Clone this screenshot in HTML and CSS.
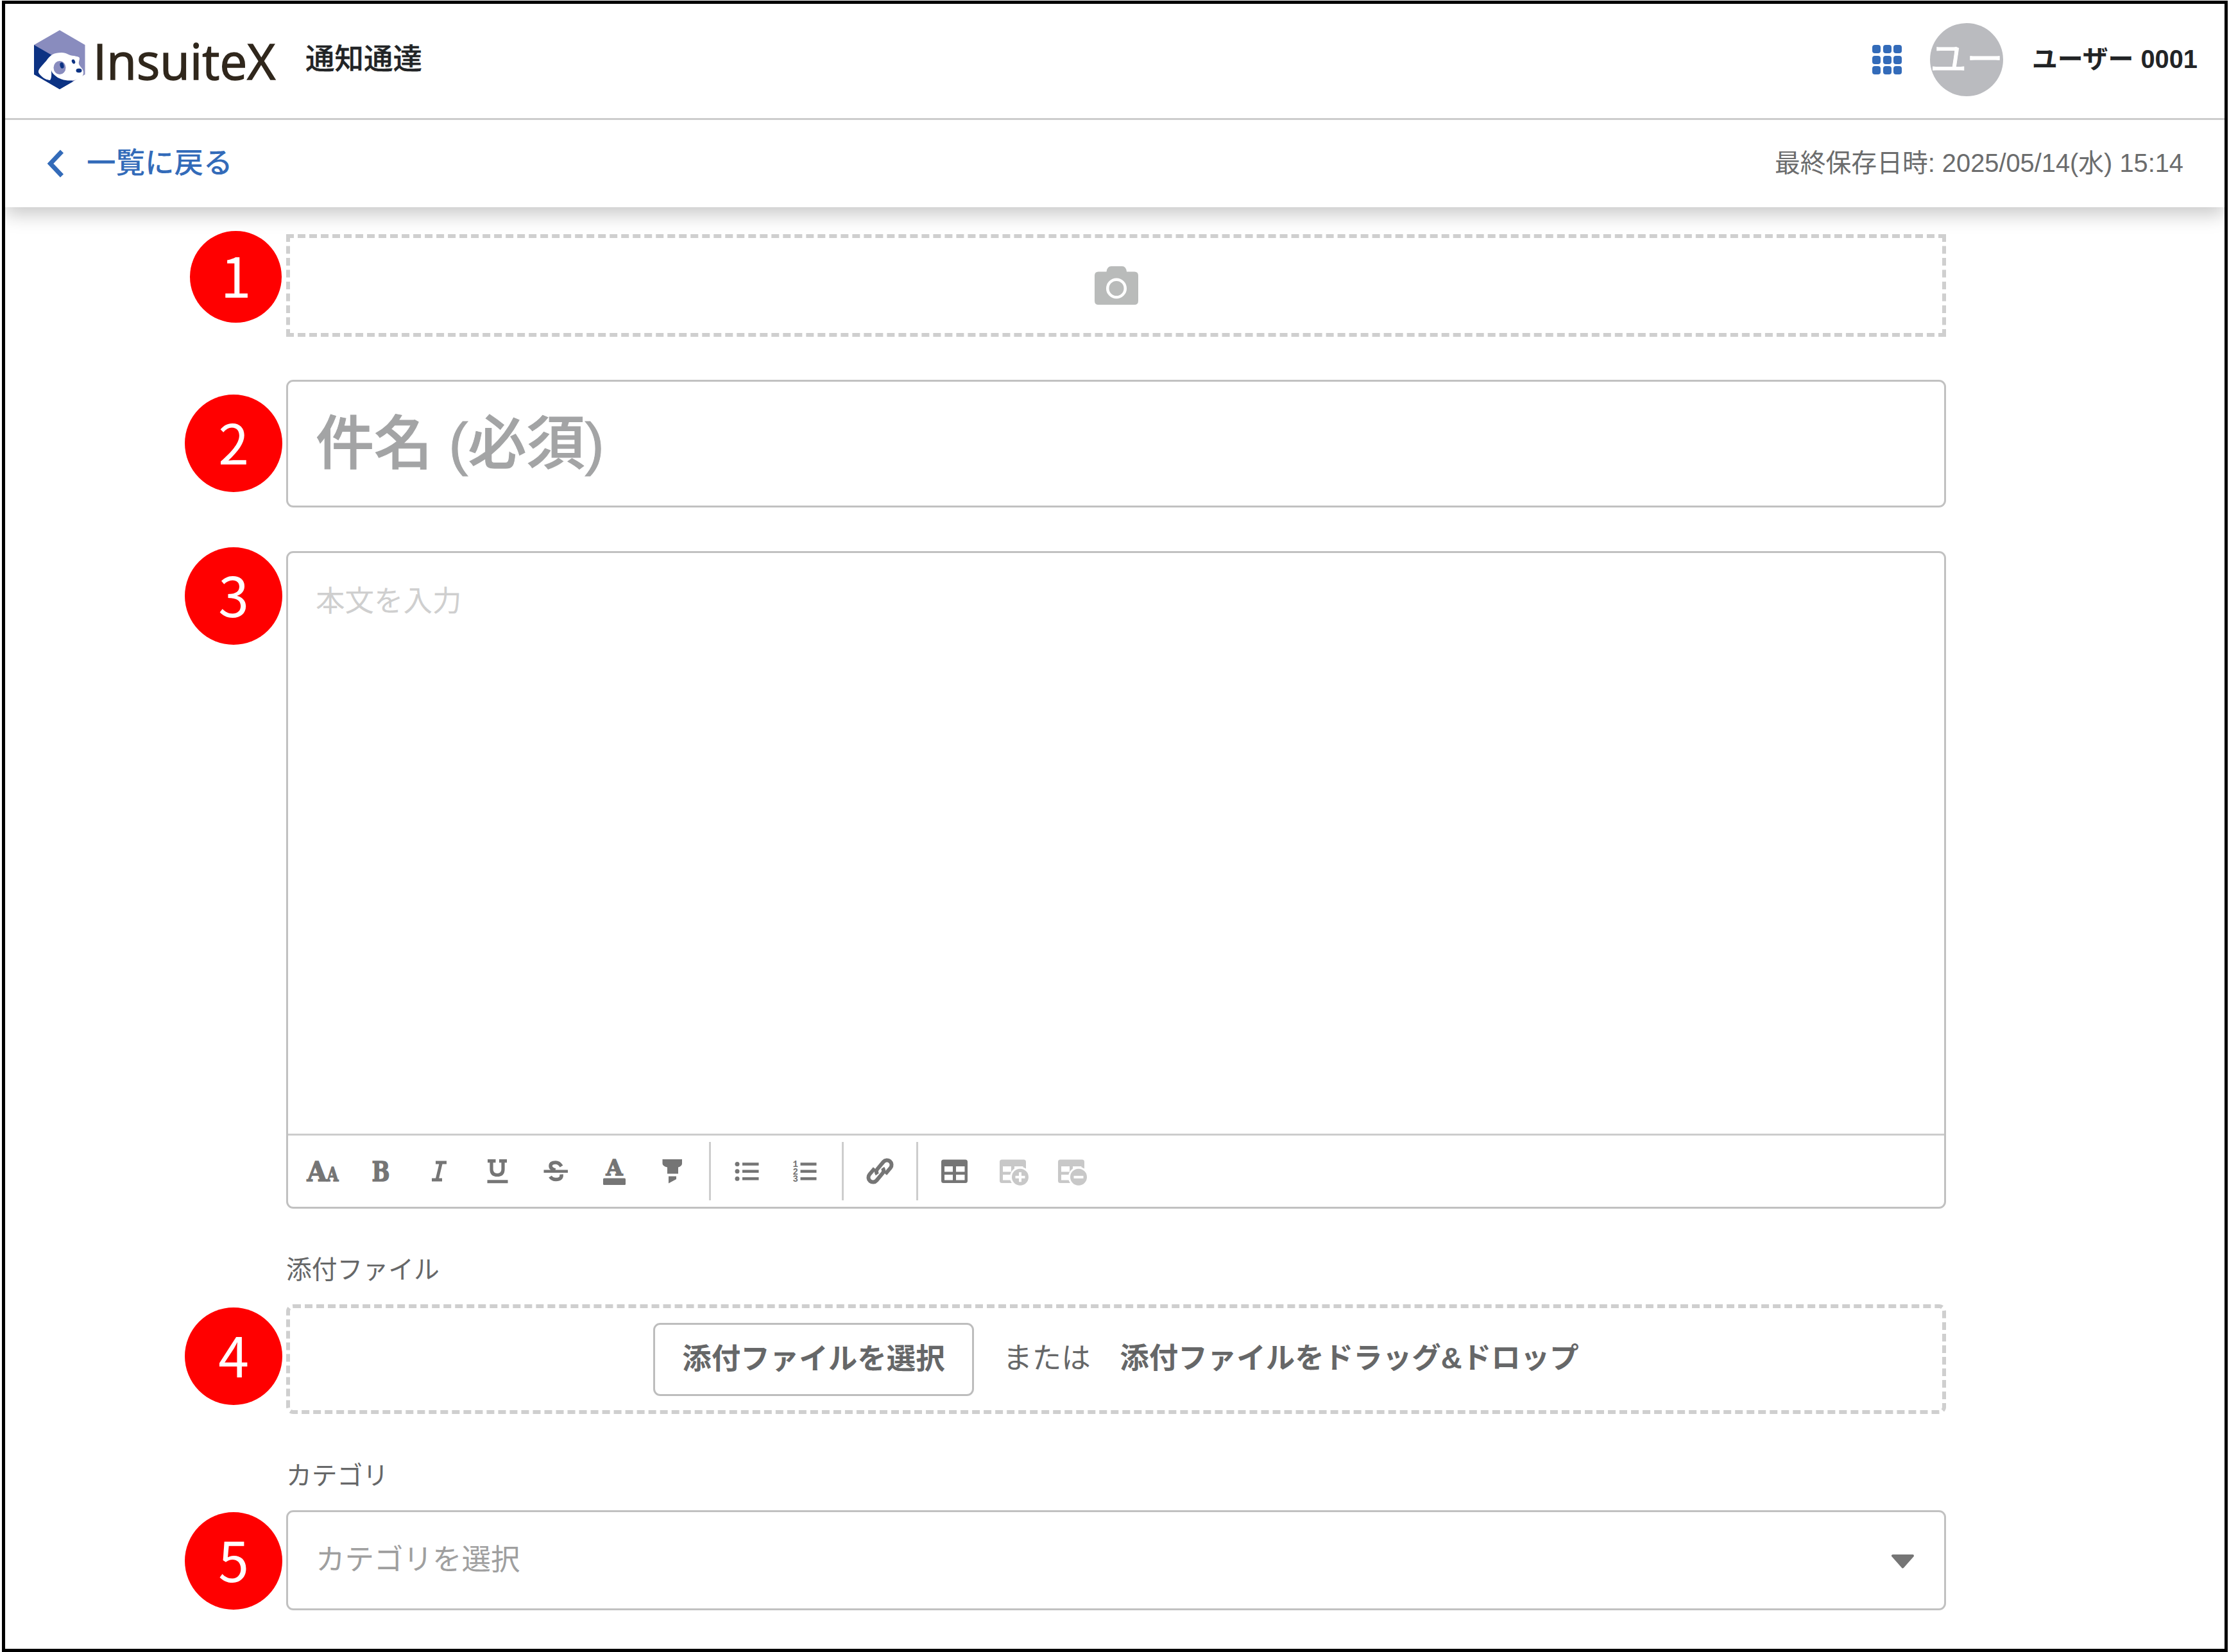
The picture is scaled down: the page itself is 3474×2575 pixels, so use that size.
FILE: index.html
```
<!DOCTYPE html>
<html lang="ja">
<head>
    <meta charset="utf-8" />
    <title>通知通達</title>
    <link rel="stylesheet" href="styles.css">
</head>
<body>
    <div id="frame">
        <div id="header">
            <svg class="logo_mark" viewBox="0 0 80 92">
                <polygon points="40,0 79.500,23 79.500,69 40,92 0,69 0,23" fill="#898cbe"/>
                <polygon points="0,23 40,46 60,80 40,92 0,69" fill="#0c3283"/>
                <path d="M7 66C6 61 12 56 19 48C26 38 31 35 43 35C51 35 55 40 62 40C66 41 71 41 71 44C71 47 69 50 70 53C72 58 77 60 77 66C77 72 74 74 66 77C57 80 41 79 32 70C29 67 27 65 27 62C27 68 28 74 25 78C20 79 10 72 7 66Z" fill="#fff"/>
                <ellipse cx="40" cy="58.500" rx="9.500" ry="10.500" fill="#898cbe"/>
                <ellipse cx="43.500" cy="55" rx="3" ry="4.700" fill="#0c3283" transform="rotate(-15 43.500 55)"/>
                <ellipse cx="61.500" cy="49" rx="2.500" ry="3.500" fill="#0c3283" transform="rotate(-25 61.500 49)"/>
                <ellipse cx="70" cy="63" rx="4.500" ry="3.200" fill="#0c3283"/>
                <path d="M40 92L62 79.500Q53 82 44 79L38 76Q30 81 20 77L13 76Z" fill="#0c3283"/>
            </svg>
            <div class="logo_text">InsuiteX</div>
            <div class="app_name">通知通達</div>
            <div class="apps_btn">
                <i></i><i></i><i></i>
                <i></i><i></i><i></i>
                <i></i><i></i><i></i>
            </div>
            <div class="avatar">ユー</div>
            <div class="user_name">ユーザー 0001</div>
        </div>
        <div id="sub_header">
            <svg class="back_icon" viewBox="0 0 28 46"><path d="M23.500 4L5.500 23L23.500 42" fill="none" stroke="#336bb9" stroke-width="7"/></svg>
            <div class="back_text">一覧に戻る</div>
            <div class="saved_at">最終保存日時: 2025/05/14(水) 15:14</div>
        </div>

        <div id="form">
            <!-- ヘッダー画像 -->
            <div class="photo_box">
                <div class="num num_small">1</div>
                <svg class="camera" viewBox="0 0 68 60">
                    <path d="M6 8.500H18.500Q19.500 0 26 0H43Q49 0 50 8.500H62Q68 8.500 68 14.500V54Q68 60 62 60H6Q0 60 0 54V14.500Q0 8.500 6 8.500Z" fill="#b9bbba"/>
                    <circle cx="34" cy="34.500" r="13.800" fill="none" stroke="#fff" stroke-width="4.500"/>
                </svg>
            </div>

            <!-- 件名 -->
            <div class="subject_box">
                <div class="num">2</div>
                <span>件名 (必須)</span>
            </div>

            <!-- 本文 -->
            <div class="editor">
                <div class="num">3</div>
                <div class="editor_body">本文を入力</div>
                <div class="toolbar">
                    <svg class="tool" viewBox="-45.5 -45.5 91 91">
                        <text x="-24" y="15.500" font-size="42" textLength="31" lengthAdjust="spacingAndGlyphs">A</text>
                        <text x="7" y="15.500" font-size="30" textLength="18" lengthAdjust="spacingAndGlyphs">A</text>
                    </svg>
                    <svg class="tool" viewBox="-45.5 -45.5 91 91"><text x="-14" y="15.500" font-size="42.500" textLength="28" lengthAdjust="spacingAndGlyphs">B</text></svg>
                    <svg class="tool" viewBox="-45.5 -45.5 91 91">
                        <path d="M-5.500 -13.500H11.500M-11.500 13.500H4.500M3 -13.500L-3.500 13.500" stroke-width="5"/>
                    </svg>
                    <svg class="tool" viewBox="-45.5 -45.5 91 91">
                        <path d="M-15.500 -15.800H-3M2.500 -15.800H14.500M-9.500 -16V-3Q-9.500 6 -0.500 6Q8.500 6 8.500 -3V-16" stroke-width="5.200"/>
                        <path d="M-16 16.200H16" stroke-width="5"/>
                    </svg>
                    <svg class="tool" viewBox="-45.5 -45.5 91 91">
                        <path d="M8.500 -7.500Q5 -13.500 -0.500 -13.500Q-8.500 -13.500 -8.500 -8Q-8.500 -3.500 -1 -1.500M8.500 5Q9.500 13 0 13Q-6 13 -9 8.500" stroke-width="5.600"/>
                        <path d="M-19 0.300H18.500" stroke-width="4.500"/>
                    </svg>
                    <svg class="tool" viewBox="-45.5 -45.5 91 91">
                        <text x="-13" y="6.500" font-size="34" textLength="26" lengthAdjust="spacingAndGlyphs">A</text>
                        <rect x="-17.500" y="11" width="35" height="10.500" rx="1.500"/>
                    </svg>
                    <svg class="tool" viewBox="-45.5 -45.5 91 91">
                        <path class="solid" d="M-16 -18.500H14.500V-12Q14.500 -8 8.500 -6V4H-8.500V-6Q-16 -8 -16 -12ZM-6.500 8H5.500V12.500L-6.500 19Z"/>
                    </svg>
                    <div class="tool_line"></div>
                    <svg class="tool" viewBox="-45.5 -45.5 91 91">
                        <circle cx="-15.500" cy="-11" r="3.500"/><circle cx="-15.500" cy="0.300" r="3.500"/><circle cx="-15.500" cy="11.700" r="3.500"/>
                        <path d="M-7.500 -11H18M-7.500 0.300H18M-7.500 11.700H18" stroke-width="4.600"/>
                    </svg>
                    <svg class="tool" viewBox="-45.5 -45.5 91 91">
                        <g class="list_no">
                            <text x="-20" y="-6.500">1</text>
                            <text x="-20" y="5">2</text>
                            <text x="-20" y="16.500">3</text>
                        </g>
                        <path d="M-8 -11H17M-8 0.300H17M-8 11.700H17" stroke-width="4.600"/>
                    </svg>
                    <div class="tool_line"></div>
                    <svg class="tool" viewBox="-45.5 -45.5 91 91">
                        <g transform="rotate(40)" stroke-width="6">
                            <path d="M9.200 -2V-14.500A7.200 7.200 0 0 0 -5.200 -14.500V0Q-5.200 5 0 6.500"/>
                            <path d="M-9.200 2V14.500A7.200 7.200 0 0 0 5.200 14.500V0Q5.200 -5 0 -6.500"/>
                        </g>
                    </svg>
                    <div class="tool_line"></div>
                    <svg class="tool" viewBox="-45.5 -45.5 91 91">
                        <path class="solid" fill-rule="evenodd" d="M-17 -18H17Q20.500 -18 20.500 -14.500V15Q20.500 18.500 17 18.500H-17Q-20.500 18.500 -20.500 15V-14.500Q-20.500 -18 -17 -18ZM-15.500 -7.500V1H-2.500V-7.500ZM2.500 -7.500V1H16V-7.500ZM-15.500 5.500V14H-2.500V5.500ZM2.500 5.500V14H16V5.500Z"/>
                    </svg>
                    <svg class="tool disabled" viewBox="-45.5 -45.5 91 91">
                        <path class="solid" fill-rule="evenodd" d="M-17 -18H17Q20.500 -18 20.500 -14.500V15Q20.500 18.500 17 18.500H-17Q-20.500 18.500 -20.500 15V-14.500Q-20.500 -18 -17 -18ZM-15.500 -7.500V1H-2.500V-7.500ZM2.500 -7.500V1H16V-7.500ZM-15.500 5.500V14H-2.500V5.500ZM2.500 5.500V14H16V5.500Z"/>
                        <circle class="white" cx="11.500" cy="9.300" r="16"/>
                        <rect class="white" x="17" y="8" width="10" height="15"/>
                        <circle cx="11.500" cy="9.300" r="13"/>
                        <path class="white_line" d="M4 9.300H19M11.500 1.800V16.800" stroke-width="4"/>
                    </svg>
                    <svg class="tool disabled" viewBox="-45.5 -45.5 91 91">
                        <path class="solid" fill-rule="evenodd" d="M-17 -18H17Q20.500 -18 20.500 -14.500V15Q20.500 18.500 17 18.500H-17Q-20.500 18.500 -20.500 15V-14.500Q-20.500 -18 -17 -18ZM-15.500 -7.500V1H-2.500V-7.500ZM2.500 -7.500V1H16V-7.500ZM-15.500 5.500V14H-2.500V5.500ZM2.500 5.500V14H16V5.500Z"/>
                        <circle class="white" cx="11.500" cy="9.300" r="16"/>
                        <rect class="white" x="17" y="8" width="10" height="15"/>
                        <circle cx="11.500" cy="9.300" r="13"/>
                        <path class="white_line" d="M4 9.300H19" stroke-width="4"/>
                    </svg>
                </div>
            </div>

            <!-- 添付ファイル -->
            <div class="label">添付ファイル</div>
            <div class="drop_box">
                <div class="num">4</div>
                <div class="file_btn">添付ファイルを選択</div>
                <div>または</div>
                <div class="drop_text">添付ファイルをドラッグ&amp;ドロップ</div>
            </div>

            <!-- カテゴリ -->
            <div class="label">カテゴリ</div>
            <div class="select_box">
                <div class="num">5</div>
                <div>カテゴリを選択</div>
                <svg class="arrow" viewBox="0 0 37 22"><path d="M3 2H34L18.500 19.500Z" fill="#757575" stroke="#757575" stroke-width="4" stroke-linejoin="round"/></svg>
            </div>
        </div>
    </div>
</body>
</html>
```
FILE: styles.css
```
*{
    box-sizing: border-box;
    padding: 0;
    margin: 0;
}
body{
    background-color: #fff;
    font-family: "Liberation Sans", "Noto Sans CJK JP", sans-serif;
    font-size: 45.5px;
    line-height: 1.5;
    white-space: nowrap;
}
svg{
    display: block;
    flex-shrink: 0;
}

#frame{
    height: 2574px;
    margin: 1px 2px 0 3px;
    border: 5px solid #000;
    overflow: hidden;
}

/* ヘッダー */
#header{
    position: relative;
    display: flex;
    align-items: center;
    height: 178px;
    padding: 0 42px 4px 45px;
    background-color: #fff;
}
.logo_mark{
    width: 80px;
    height: 92px;
}
.logo_text{
    width: 294px;
    margin-left: 12px;
    padding-top: 3px;
    font-family: "Open Sans", sans-serif;
    font-size: 76px;
    line-height: 92px;
    letter-spacing: 0.1px;
    color: #30271c;
    -webkit-text-stroke: 1.5px #30271c;
}
.app_name{
    margin-left: 37px;
    font-weight: 500;
    color: #222426;
    -webkit-text-stroke: 0.3px #222426;
}
.apps_btn{
    display: grid;
    grid-template-columns: repeat(3, 13px);
    gap: 3.5px;
    margin-left: auto;
}
.apps_btn i{
    height: 13px;
    border-radius: 4px;
    background-color: #336bb9;
}
.avatar{
    width: 114px;
    height: 114px;
    margin-left: 44px;
    border-radius: 50%;
    background-color: #babbbf;
    color: #fff;
    font-size: 57px;
    line-height: 112px;
    -webkit-text-stroke: 1px #fff;
}
.user_name{
    margin-left: 45px;
    font-size: 39.8px;
    font-weight: bold;
    color: #222426;
}

#sub_header{
    display: flex;
    align-items: center;
    height: 139px;
    padding: 0 64px 0 65px;
    border-top: 3px solid #ccc;
    box-shadow: 0 11px 28px rgba(0, 0, 0, 0.22);
}
.back_icon{
    width: 28px;
    height: 46px;
}
.back_text{
    margin-left: 34px;
    font-weight: 500;
    color: #336bb9;
}
.saved_at{
    margin-left: auto;
    font-size: 39.8px;
    color: #6b6c6d;
}

/* 入力フォーム */
#form{
    width: 2587px;
    margin: 42px 0 0 438px;
    color: #666768;
}
.num{
    position: absolute;
    width: 152px;
    height: 152px;
    border-radius: 50%;
    background-color: #f00;
    color: #fff;
    font-family: "Noto Sans CJK JP", sans-serif;
    font-size: 86px;
    font-weight: normal;
    line-height: 143px;
    text-align: center;
    -webkit-text-stroke: 0;
}
.num_small{
    width: 143px;
    height: 143px;
    line-height: 134px;
}
.photo_box, .subject_box, .editor, .drop_box, .select_box{
    position: relative;
}
.photo_box{
    display: flex;
    align-items: center;
    justify-content: center;
    height: 160px;
    border: 6px dashed #cfcfcf;
}
.photo_box .num{
    top: -11px;
    left: -156px;
}
.camera{
    width: 68px;
    height: 60px;
}
.subject_box{
    display: flex;
    align-items: center;
    height: 199px;
    margin-top: 67px;
    padding-left: 43px;
    border: 3px solid #c1c1c1;
    border-radius: 11px;
    color: #a3a4a5;
    font-size: 91px;
    font-weight: 500;
    line-height: 136px;
    -webkit-text-stroke: 1px #a3a4a5;
}
.subject_box .num{
    top: 20px;
    left: -161px;
}
.editor{
    height: 1025px;
    margin-top: 68px;
    border: 3px solid #c1c1c1;
    border-radius: 11px;
}
.editor .num{
    top: -9px;
    left: -161px;
}
.editor_body{
    height: 905px;
    padding: 42px 43px;
    line-height: 68px;
    color: #cfcfcf;
}
.toolbar{
    display: flex;
    align-items: center;
    height: 114px;
    padding-left: 8px;
    border-top: 3px solid #cdcdcd;
}
.tool{
    width: 91px;
    height: 91px;
    fill: #757575;
    stroke: #757575;
    stroke-width: 0;
    font-family: "DejaVu Serif", serif;
    font-weight: bold;
}
.tool text{
    stroke-width: 1.5px;
}
.tool path{
    fill: none;
}
.tool .solid{
    fill: #757575;
}
.tool .list_no text{
    font-family: "Liberation Mono", monospace;
    font-size: 14px;
    stroke-width: 0;
}
.disabled, .disabled .solid{
    fill: #c8c8c8;
}
.disabled .white{
    fill: #fff;
}
.disabled .white_line{
    stroke: #fff;
}
.tool_line{
    width: 3px;
    height: 91px;
    margin: 0 11px;
    background-color: #cdcdcd;
}
.label{
    height: 60px;
    margin-top: 65px;
    font-size: 39.8px;
    line-height: 60px;
}
.drop_box{
    display: flex;
    align-items: center;
    justify-content: center;
    gap: 45.5px;
    height: 171px;
    margin-top: 24px;
    border: 6px dashed #cfcfcf;
    border-radius: 11px;
}
.drop_box .num{
    top: -1px;
    left: -164px;
}
.file_btn{
    height: 114px;
    padding: 0 42px;
    border: 3px solid #bdbdbd;
    border-radius: 11px;
    line-height: 108px;
}
.file_btn, .drop_text{
    font-weight: bold;
}
.drop_box + .label{
    margin-top: 66px;
}
.select_box{
    display: flex;
    align-items: center;
    justify-content: space-between;
    height: 156px;
    margin-top: 24px;
    padding: 0 46px 0 43px;
    border: 3px solid #c1c1c1;
    border-radius: 11px;
    color: #9f9f9f;
}
.select_box .num{
    top: 0;
    left: -161px;
}
.arrow{
    width: 37px;
    height: 22px;
    margin-top: 3px;
}
```
